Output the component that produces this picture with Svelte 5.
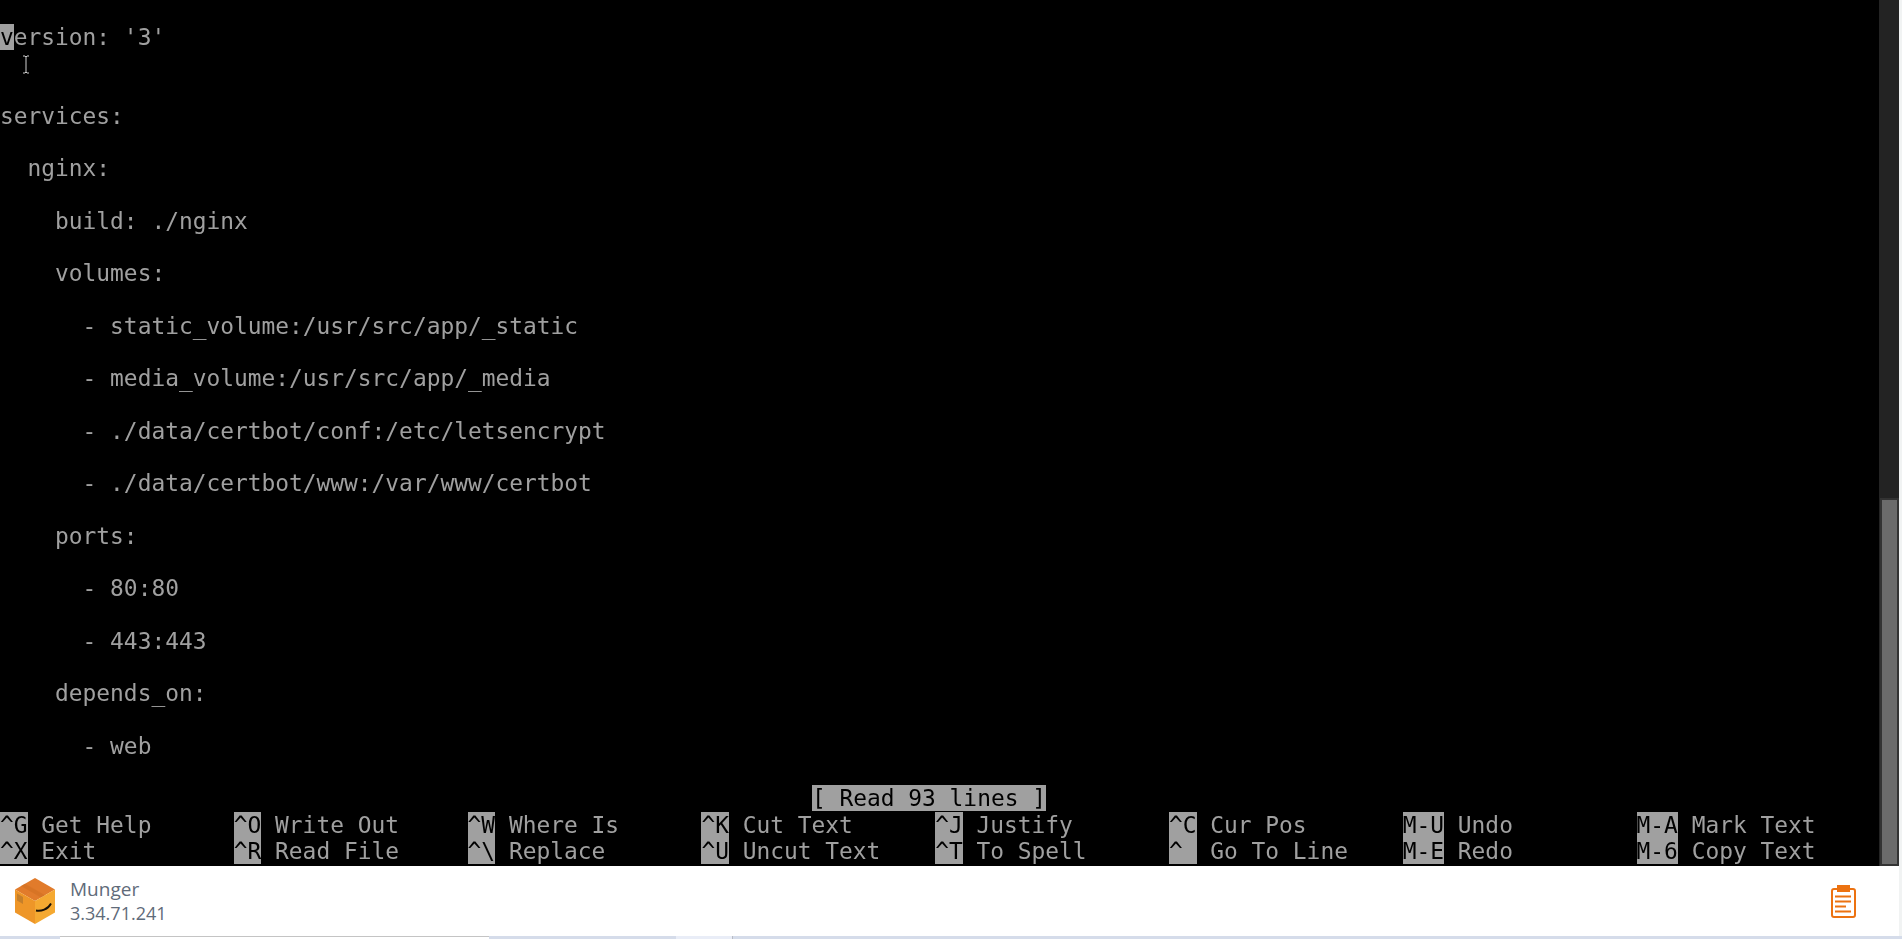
<script>
  const lines = [
    "version: '3'",
    '',
    '',
    'services:',
    '',
    '  nginx:',
    '',
    '    build: ./nginx',
    '',
    '    volumes:',
    '',
    '      - static_volume:/usr/src/app/_static',
    '',
    '      - media_volume:/usr/src/app/_media',
    '',
    '      - ./data/certbot/conf:/etc/letsencrypt',
    '',
    '      - ./data/certbot/www:/var/www/certbot',
    '',
    '    ports:',
    '',
    '      - 80:80',
    '',
    '      - 443:443',
    '',
    '    depends_on:',
    '',
    '      - web',
    ''
  ];

  const shortcuts = [
    ['^G', 'Get Help', '^X', 'Exit'],
    ['^O', 'Write Out', '^R', 'Read File'],
    ['^W', 'Where Is', '^\\', 'Replace'],
    ['^K', 'Cut Text', '^U', 'Uncut Text'],
    ['^J', 'Justify', '^T', 'To Spell'],
    ['^C', 'Cur Pos', '^_', 'Go To Line'],
    ['M-U', 'Undo', 'M-E', 'Redo'],
    ['M-A', 'Mark Text', 'M-6', 'Copy Text']
  ];
</script>

<div class="page">
  <main class="session">
    <div class="terminal">
      {#each lines as line, i}
        <div class="row">{#if i === 0}<span class="hl">v</span>{line.slice(1)}{:else}{line}{/if}</div>
      {/each}
      <div class="row status"><span class="hl">[ Read 93 lines ]</span></div>
      <div class="keys">
        {#each shortcuts as s}
          <div class="key">
            <div class="row"><span class="hl">{s[0]}</span> {s[1]}</div>
            <div class="row"><span class="hl">{s[2]}</span> {s[3]}</div>
          </div>
        {/each}
      </div>
      <svg class="ibeam" width="10" height="19" viewBox="0 0 10 19" aria-hidden="true">
        <path d="M2 1h2l1 1 1-1h2M5 2v15M2 18h2l1-1 1 1h2" fill="none" stroke="#d0d0d0" stroke-width="1" />
      </svg>
    </div>
    <div class="scrollbar"><div class="thumb"></div></div>
  </main>

  <footer class="info">
    <svg class="box" width="40" height="46" viewBox="0 0 40 46" aria-hidden="true">
      <path d="M20 0 40 11.500 20 23 0 11.500Z" fill="#e17b2b" />
      <path d="M0 11.500 20 23V46L0 34.500Z" fill="#ee9628" />
      <path d="M40 11.500 20 23V46L40 34.500Z" fill="#f5a931" />
      <path d="M10 5.800 30 17.300 26 19.500 6 8Z" fill="#cf6f20" opacity=".55" />
      <path d="M2 15.500 8 19V26L2 22.500Z" fill="#b5772c" opacity=".75" />
      <path d="M21 32.500c5 1 12-1 15-7" fill="none" stroke="#1a1208" stroke-width="1.800" />
    </svg>
    <div class="names">
      <div class="name">Munger</div>
      <div class="ip">3.34.71.241</div>
    </div>
    <svg class="clip" width="25" height="33" viewBox="0 0 25 33" aria-hidden="true">
      <path d="M6 4H3a2 2 0 0 0-2 2v24a2 2 0 0 0 2 2h19a2 2 0 0 0 2-2V6a2 2 0 0 0-2-2h-3" fill="none" stroke="#ec7211" stroke-width="2" />
      <rect x="6" y="0" width="13" height="7" fill="#ec7211" />
      <path d="M4 11.500h16M4 16.500h16M4 21.500h11M4 26.500h16" stroke="#ec7211" stroke-width="2" />
    </svg>
  </footer>

  <div class="tabstrip">
    <div class="tab active"></div>
    <div class="tab plain"></div>
    <div class="tab soft"></div>
    <div class="tab divider"></div>
  </div>
</div>

<style>
  :global(body) {
    margin: 0;
    background: #f1f3f3;
    overflow: hidden;
  }

  .page {
    height: 939px;
    display: flex;
    flex-direction: column;
  }

  .session {
    height: 866px;
    display: flex;
    width: 1899px;
    background: #000;
    overflow: hidden;
  }

  .terminal {
    position: relative;
    width: 1879px;
    padding-top: 24px;
    box-sizing: border-box;
    font-family: "DejaVu Sans Mono", monospace;
    font-size: 22.86px;
    color: #a0a0a0;
    filter: blur(0.45px);
  }

  .row {
    height: 26.25px;
    line-height: 26.25px;
    white-space: pre;
  }

  .hl {
    background: #a0a0a0;
    color: #000;
  }

  .status {
    padding-left: 59ch;
  }

  .keys {
    display: grid;
    grid-template-columns: repeat(7, 233.8px) 1fr;
  }

  .ibeam {
    position: absolute;
    left: 21px;
    top: 55px;
  }

  .scrollbar {
    width: 20px;
    background: #232323;
    padding-top: 500px;
    box-sizing: border-box;
    display: flex;
    justify-content: center;
  }

  .thumb {
    width: 15px;
    height: 364px;
    background: #6b6b6b;
    box-shadow: 0 0 0 2px #333;
  }

  .info {
    height: 70px;
    width: 1899px;
    background: #fff;
    display: flex;
    align-items: center;
    padding-left: 15px;
    box-sizing: border-box;
  }

  .box {
    flex: none;
  }

  .names {
    margin-left: 15px;
    margin-top: -1px;
    font-family: "Open Sans", "Liberation Sans", sans-serif;
    color: #5f6b7a;
  }

  .name {
    font-size: 19px;
    line-height: 24px;
  }

  .ip {
    font-size: 18px;
    line-height: 24px;
  }

  .clip {
    margin-left: auto;
    margin-right: 43px;
  }

  .tabstrip {
    height: 3px;
    background: #d5dcea;
    padding-left: 60px;
    display: flex;
  }

  .tab.active {
    width: 429px;
    box-sizing: border-box;
    background: #fff;
    border-top: 1px solid #c4c4c4;
  }

  .tab.plain {
    width: 187px;
  }

  .tab.soft {
    width: 56px;
    background: #e9edf7;
  }

  .tab.divider {
    width: 1px;
    background: #b8bcc4;
  }
</style>
